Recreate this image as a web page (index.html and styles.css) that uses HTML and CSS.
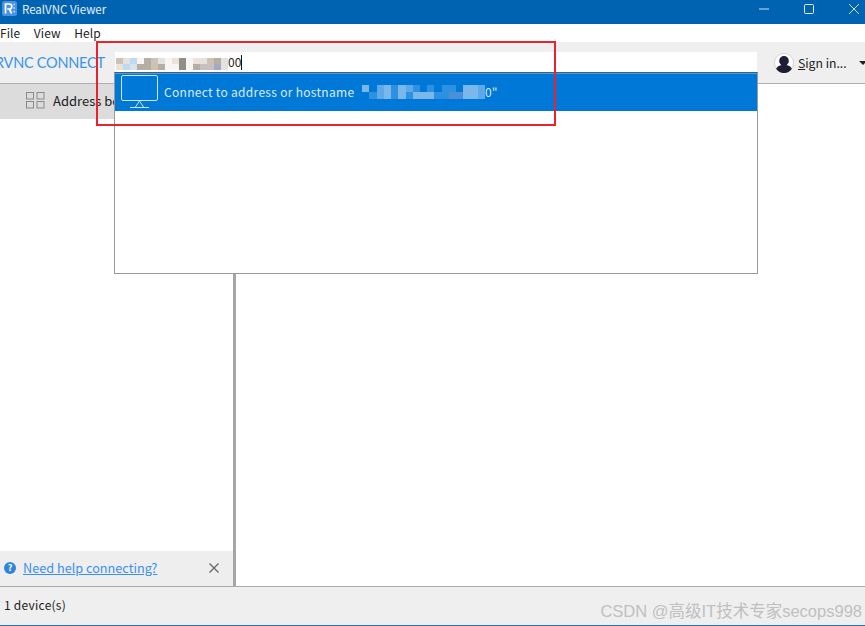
FILE: index.html
```html
<!DOCTYPE html>
<html lang="en">
<head>
<meta charset="utf-8">
<title>RealVNC Viewer</title>
<link rel="stylesheet" href="styles.css">
</head>
<body>
<div class="app">
  <header class="titlebar">
    <div class="title-left">
      <svg class="app-icon" width="15" height="15" viewBox="0 0 15 15"><rect width="15" height="15" rx="2.500" fill="#4b93e2"/><path d="M3.500 12.500V3h3.800a2.500 2.500 0 0 1 0 5H5.200M7.300 8l2.400 4.500" fill="none" stroke="#fff" stroke-width="1.700"/><path d="M11.500 3.500h1.500M11.500 7h1.500M11.500 10.500h1.500" stroke="#cfe2f7" stroke-width="1.500"/></svg>
      <span class="title-text">RealVNC Viewer</span>
    </div>
    <div class="win-controls">
      <svg width="10" height="2" viewBox="0 0 10 2"><path d="M0 1h10" stroke="#cfe2f3" stroke-width="1"/></svg>
      <svg width="10" height="10" viewBox="0 0 10 10"><rect x=".5" y=".5" width="9" height="9" rx="1" fill="none" stroke="#e4eef8" stroke-width="1"/></svg>
      <svg width="10" height="10" viewBox="0 0 10 10"><path d="M0 0l10 10M10 0L0 10" stroke="#cfe2f3" stroke-width="1"/></svg>
    </div>
  </header>
  <nav class="menubar"><span>File</span><span>View</span><span>Help</span></nav>
  <div class="toolbar">
    <div class="logo-box"><span class="logo">RVNC CONNECT</span></div>
    <div class="address">
      <div class="mosaic mosaic-input">
        <i class="c1"></i><i class="c2"></i><i class="c7"></i><i class="c0"></i><i class="c4"></i><i class="c1"></i><i class="c2"></i><i class="c0"></i><i class="c3"></i><i class="c6"></i><i class="c0"></i><i class="c3"></i><i class="c2"></i><i class="c1"></i><i class="c4"></i><i class="c2"></i>
        <i class="c3"></i><i class="c7"></i><i class="c5"></i><i class="c4"></i><i class="c4"></i><i class="c1"></i><i class="c4"></i><i class="c0"></i><i class="c0"></i><i class="c6"></i><i class="c0"></i><i class="c4"></i><i class="c8"></i><i class="c8"></i><i class="c9"></i><i class="c2"></i>
      </div>
      <span class="typed">00</span><span class="caret"></span>
    </div>
    <div class="signin">
      <svg width="20" height="20" viewBox="0 0 24 24"><circle cx="12" cy="12" r="11.500" fill="#fff" stroke="#ccc" stroke-width="1"/><circle cx="12" cy="9.500" r="5.800" fill="#1d1d35"/><path d="M2.500 19c2-4 6-4.500 9.500-4.500s7.500 .5 9.500 4.500a11.500 11.500 0 0 1-19 0z" fill="#1d1d35"/></svg>
      <span class="signin-text"><u>S</u>ign in...</span>
      <span class="arrow"></span>
    </div>
  </div>
  <main class="content">
    <aside class="sidebar">
      <div class="tab">
        <svg width="19" height="17" viewBox="0 0 19 17"><g fill="none" stroke="#8a8a8a" stroke-width="1"><rect x=".5" y=".5" width="7" height="6.500"/><rect x="11" y=".5" width="7" height="6.500"/><rect x=".5" y="9.500" width="7" height="6.500"/><rect x="11" y="9.500" width="7" height="6.500"/></g></svg>
        <span>Address book</span>
      </div>
      <div class="sidebar-fill"></div>
      <div class="help">
        <span class="help-icon">?</span>
        <a class="help-link">Need help connecting?</a>
        <svg class="help-close" width="10" height="10" viewBox="0 0 10 10"><path d="M.5.5l9 9M9.500.5l-9 9" stroke="#666" stroke-width="1.300"/></svg>
      </div>
    </aside>
    <div class="splitter"></div>
    <section class="pane"></section>
  </main>
  <footer class="statusbar">1 device(s)</footer>

  <div class="dropdown">
    <div class="row">
      <svg width="38" height="33" viewBox="0 0 38 33"><g fill="none" stroke="#cfe6fa" stroke-width="1"><rect x=".5" y=".5" width="36" height="25" rx="1.500"/><path d="M18.500 26l-4 6M18.500 26l4 6M9 32.500h19"/></g></svg>
      <span class="row-text">Connect to address or hostname</span>
      <div class="mosaic mosaic-row">
        <i class="b0"></i><i class="b3"></i><i class="b0"></i><i class="b1"></i><i class="b3"></i><i class="b2"></i><i class="b3"></i><i class="b1"></i><i class="b2"></i><i class="b0"></i><i class="b2"></i><i class="b0"></i><i class="b2"></i><i class="b2"></i><i class="b0"></i><i class="b3"></i><i class="b3"></i><i class="b1"></i>
        <i class="b0"></i><i class="b0"></i><i class="b2"></i><i class="b1"></i><i class="b3"></i><i class="b2"></i><i class="b3"></i><i class="b2"></i><i class="b3"></i><i class="b3"></i><i class="b3"></i><i class="b2"></i><i class="b2"></i><i class="b4"></i><i class="b4"></i><i class="b3"></i><i class="b3"></i><i class="b1"></i>
      </div>
      <span class="row-tail">0"</span>
    </div>
  </div>
  <div class="annotation"></div>
  <div class="watermark">CSDN @高级IT技术专家secops998</div>
</div>
</body>
</html>
```

FILE: styles.css
```css
* { box-sizing: border-box; }
html, body { margin: 0; height: 100%; overflow: hidden; }
body { font-family: "Noto Sans CJK SC", "Noto Sans", sans-serif; font-size: 12px; color: #222; background: #fff; }
.app { position: relative; width: 865px; height: 626px; display: flex; flex-direction: column; border-bottom: 1px solid #2f6fa8; }

.titlebar { height: 24px; flex: none; background: #0063b1; display: flex; justify-content: space-between; align-items: center; padding-bottom: 7px; color: #e6f0f9; }
.title-left { display: flex; align-items: center; gap: 5px; padding-left: 2px; }
.app-icon { display: block; }
.title-text { font-size: 11.500px; line-height: 16px; }
.win-controls { display: flex; align-items: center; gap: 35px; padding-right: 6px; }

.menubar { height: 18px; flex: none; background: #fff; display: flex; align-items: center; gap: 13.500px; font-size: 12px; line-height: 18px; letter-spacing: .08px; }

.toolbar { height: 42px; flex: none; background: #efefef; border-bottom: 1px solid #b0b0b0; display: flex; align-items: flex-start; }
.logo-box { width: 115px; height: 41px; flex: none; overflow: hidden; display: flex; align-items: center; }
.logo { display: block; margin-left: -5px; padding-bottom: 1px; white-space: nowrap; font-family: "Lato", sans-serif; font-weight: 400; font-size: 14.500px; letter-spacing: -.25px; color: #3a94e8; }
.address { width: 642px; height: 20px; margin-top: 10px; flex: none; background: #fff; display: flex; align-items: center; }
.typed { font-size: 12px; line-height: 18px; color: #222; }
.caret { width: 1px; height: 15px; background: #111; }
.mosaic { display: grid; flex: none; filter: blur(.5px); }
.mosaic i { display: block; }
.mosaic-input { width: 112px; height: 12px; grid-template-columns: repeat(16, 1fr); grid-template-rows: 1fr 1fr; margin: 4px 0 0 1px; }
.c0 { background: #f7f6f4; }
.c1 { background: #cdc2b4; }
.c2 { background: #e4e2df; }
.c3 { background: #ece2da; }
.c4 { background: #b5aea2; }
.c5 { background: #d5e4ee; }
.c6 { background: #928d88; }
.c7 { background: #bfdaf0; }
.c8 { background: #c7bfc4; }
.c9 { background: #a5a9c4; }

.signin { flex: 1; height: 41px; display: flex; align-items: center; padding-left: 17px; gap: 4px; white-space: nowrap; }
.signin-text { font-size: 12.200px; margin-right: 8px; }
.arrow { width: 0; height: 0; flex: none; border-left: 4px solid transparent; border-right: 4px solid transparent; border-top: 4px solid #222; }

.content { flex: 1; min-height: 0; display: flex; }
.sidebar { width: 233px; flex: none; display: flex; flex-direction: column; background: #fff; }
.tab { height: 35px; flex: none; background: #dcdcdc; display: flex; align-items: center; gap: 8px; padding: 0 0 2px 26px; font-size: 13px; }
.sidebar-fill { flex: 1; }
.help { height: 35px; flex: none; background: #eee; display: flex; align-items: center; padding: 0 0 2px 4px; font-size: 12.700px; }
.help-icon { width: 12px; height: 12px; border-radius: 50%; background: #2f86d8; color: #fff; font-size: 9px; font-weight: 700; line-height: 12px; text-align: center; margin-right: 7px; }
.help-link { color: #3b8ff0; text-decoration: underline; }
.help-close { margin-left: 52px; }
.splitter { width: 3px; flex: none; background: #a6a6a6; }
.pane { flex: 1; background: #fff; }

.statusbar { height: 39px; flex: none; background: #efefef; border-top: 1px solid #ababab; display: flex; align-items: center; padding: 0 0 3px 4px; font-size: 12px; letter-spacing: .25px; }

.dropdown { position: absolute; left: 114px; top: 72px; width: 644px; height: 202px; background: #fff; border: 1px solid #9a9a9a; border-top: 1px solid #0f6cbc; }
.row { height: 38px; background: #0078d7; border-top: 1px solid #7e8f9c; display: flex; align-items: center; color: #dcecfa; padding: 0 0 2px 6px; }
.row-text { font-size: 12px; letter-spacing: .3px; margin-left: 5px; width: 191px; white-space: nowrap; overflow: hidden; flex: none; }
.mosaic-row { width: 130px; height: 14px; grid-template-columns: repeat(18, 1fr); grid-template-rows: 1fr 1fr; }
.row-tail { font-size: 12px; }
.b0 { background: #0078d7; }
.b1 { background: #5ea9e8; }
.b2 { background: #2e90e0; }
.b3 { background: #7ab8ec; }
.b4 { background: #4a8fd8; }

.annotation { position: absolute; left: 96px; top: 41px; width: 460px; height: 85px; border: 2px solid #e8222e; pointer-events: none; }
.watermark { position: absolute; right: 3px; top: 601px; font-family: "Liberation Sans", "Noto Sans CJK SC", sans-serif; font-size: 16.500px; line-height: 20px; color: #c0c0c0; white-space: nowrap; }
```
